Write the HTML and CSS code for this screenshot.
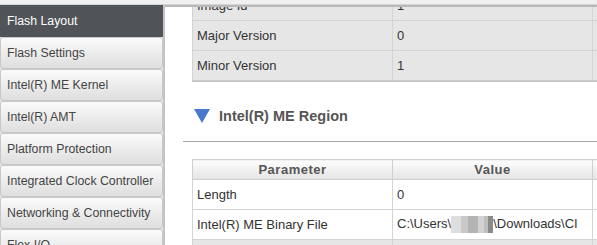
FILE: index.html
```html
<!DOCTYPE html>
<html lang="en">
<head>
    <title>Flash Layout</title>
    <link rel="stylesheet" href="styles.css">
</head>
<body>
    <div class="topbar"></div>

    <div class="app">
        <!-- Left navigation -->
        <nav class="sidebar">
            <div class="nav-item active">Flash Layout</div>
            <div class="nav-item">Flash Settings</div>
            <div class="nav-item">Intel(R) ME Kernel</div>
            <div class="nav-item">Intel(R) AMT</div>
            <div class="nav-item">Platform Protection</div>
            <div class="nav-item">Integrated Clock Controller</div>
            <div class="nav-item">Networking &amp; Connectivity</div>
            <div class="nav-item">Flex I/O</div>
        </nav>

        <main class="pane">
            <div class="pane-scroll">
                <table class="grid">
                    <colgroup>
                        <col class="col-param">
                        <col class="col-value">
                        <col class="col-help">
                    </colgroup>
                    <tr><td>Image Id</td><td>1</td><td>The image id</td></tr>
                    <tr><td>Major Version</td><td>0</td><td>The major version</td></tr>
                    <tr><td>Minor Version</td><td>1</td><td>The minor version</td></tr>
                </table>

                <div class="section-head">
                    <svg class="arrow" width="16" height="14" viewBox="0 0 16 14">
                        <polygon points="0,0 16,0 8,14" fill="#4a78cc"/>
                    </svg>
                    <span>Intel(R) ME Region</span>
                </div>
                <div class="rule"></div>

                <table class="grid grid-white">
                    <colgroup>
                        <col class="col-param">
                        <col class="col-value">
                        <col class="col-help">
                    </colgroup>
                    <tr><th>Parameter</th><th>Value</th><th>Help Text</th></tr>
                    <tr><td>Length</td><td>0</td><td>The length of the region</td></tr>
                    <tr>
                        <td>Intel(R) ME Binary File</td>
                        <td>C:\Users\<span class="blur"></span>\Downloads\CI</td>
                        <td>The binary file</td>
                    </tr>
                    <tr class="shaded"><td>Version</td><td>11.0</td><td>The version</td></tr>
                </table>
            </div>
        </main>
    </div>
</body>
</html>
```

FILE: styles.css
```css
body {
    margin: 0;
    font-family: "Liberation Sans", Arial, sans-serif;
    background-color: #fff;
    height: 245px;
    overflow: hidden;
}

.topbar {
    height: 4px;
    background-color: #f0f0f0;
    border-bottom: 1px solid #d4d4d4;
}

.app {
    display: flex;
    height: 240px;
    overflow: hidden;
}

/* Left navigation */
.sidebar {
    width: 163px;
    flex-shrink: 0;
    border-right: 2px solid #c4c4c4;
    background-color: #e8e8e8;
}

.nav-item {
    box-sizing: border-box;
    height: 32px;
    line-height: 30px;
    padding-left: 6px;
    font-size: 12.3px;
    color: #444;
    white-space: nowrap;
    border: 1px solid #c8c8c8;
    border-radius: 3px;
    background: linear-gradient(#fbfbfb, #dedede);
}

.nav-item.active {
    background: #505459;
    border-color: #505459;
    border-radius: 0;
    color: #fff;
}

/* Right content pane */
.pane {
    flex: 1;
    overflow: hidden;
    border-top: 2px solid #b8b8b8;
}

.pane-scroll {
    margin-top: -17px;
}

.grid {
    table-layout: fixed;
    border-collapse: collapse;
    width: 601px;
    margin-left: 27px;
    font-size: 13px;
    color: #333;
    background-color: #e6e6e6;
    border: 1px solid #c8c8c8;
    border-bottom-width: 2px;
}

.col-param,
.col-value,
.col-help {
    width: 200px;
}

.grid td {
    height: 29px;
    padding: 0 4px;
    border: 1px solid #d4d4d4;
    white-space: nowrap;
    overflow: hidden;
}

.grid th {
    height: 19px;
    padding: 0 4px;
    font-size: 13px;
    letter-spacing: 0.5px;
    color: #555;
    border: 1px solid #d0d0d0;
    background: linear-gradient(#fdfdfd, #e4e4e4);
    white-space: nowrap;
    overflow: hidden;
}

.grid-white {
    background-color: #fff;
    border-bottom-width: 1px;
}

.grid-white .shaded {
    background-color: #e6e6e6;
}

.blur {
    display: inline-block;
    width: 42px;
    height: 17px;
    vertical-align: middle;
    background: linear-gradient(90deg,
        #dedede 0, #dedede 10px,
        #c8c8c8 10px, #c8c8c8 17px,
        #b4b4b4 17px, #b4b4b4 27px,
        #d2d2d2 27px, #d2d2d2 33px,
        #c0c0c0 33px, #c0c0c0 37px,
        #8a8a8a 37px);
}

.section-head {
    display: flex;
    align-items: center;
    height: 28px;
    margin-top: 20px;
    margin-left: 29px;
    font-size: 14.5px;
    font-weight: bold;
    color: #555;
}

.arrow {
    margin-right: 9px;
}

.rule {
    height: 1px;
    margin-top: 11px;
    margin-left: 18px;
    background-color: #a8a8a8;
}

.rule + .grid {
    margin-top: 17px;
}
```
